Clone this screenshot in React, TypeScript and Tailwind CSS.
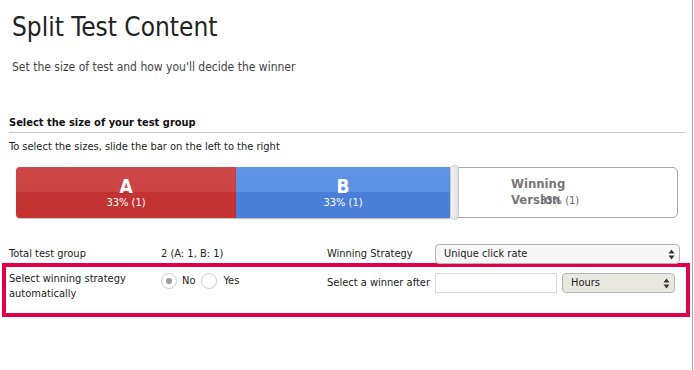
const font = { fontFamily: "'DejaVu Sans Condensed', 'DejaVu Sans', sans-serif" };

function SelectBox({ label, className }: { label: string; className: string }) {
  return (
    <div className={`flex items-center justify-between rounded-[4px] border border-[#b5b5b5] pl-2 pr-1 h-[20px] text-[11px] text-[#222] ${className}`}>
      <span>{label}</span>
      <svg width="7" height="11" viewBox="0 0 7 11">
        <path d="M3.5 0.5 L6.5 4.5 H0.5 Z" fill="#333" />
        <path d="M3.5 10.5 L6.5 6.5 H0.5 Z" fill="#333" />
      </svg>
    </div>
  );
}

function Radio({ checked }: { checked?: boolean }) {
  return (
    <span className="flex h-[16px] w-[16px] items-center justify-center rounded-full border border-[#cfcfcf] bg-white">
      {checked && <span className="h-[6px] w-[6px] rounded-full bg-[#9a9a9a]" />}
    </span>
  );
}

export default function App() {
  return (
    <div className="relative h-[370px] w-[694px] overflow-hidden bg-white text-[#222]" style={font}>
      <div className="absolute right-[1px] top-0 h-full w-px bg-[#a8a8a8]" />

      <div className="pl-3 pt-[12px]">
        <h1 className="text-[26px] leading-[30px] text-[#222]">Split Test Content</h1>
        <p className="mt-[16px] text-[12px] text-[#444]">Set the size of test and how you'll decide the winner</p>
      </div>

      <div className="ml-[9px] mr-[9px] mt-[39px] border-b border-[#c3c9cf] pb-0 text-[11px] font-bold text-[#111]">
        Select the size of your test group
      </div>
      <p className="ml-[9px] mt-[6px] text-[11px] text-[#222]">To select the sizes, slide the bar on the left to the right</p>

      {/* slider bar */}
      <div className="ml-[16px] mt-[12px] flex h-[51px] w-[662px]">
        <div className="flex w-[220px] flex-col items-center justify-center rounded-l-[4px] bg-[linear-gradient(#cf4847_0%,#cc4443_50%,#c23331_50%,#c23331_100%)] text-white shadow-[0_1px_1px_rgba(0,0,0,0.25)]">
          <span className="text-[19px] font-bold leading-[20px]">A</span>
          <span className="text-[11px] leading-[14px]">33% (1)</span>
        </div>
        <div className="flex w-[214px] flex-col items-center justify-center bg-[linear-gradient(#5f93e4_0%,#5c90e2_50%,#4a7ed9_50%,#4a7ed9_100%)] text-white shadow-[0_1px_1px_rgba(0,0,0,0.25)]">
          <span className="text-[19px] font-bold leading-[20px]">B</span>
          <span className="text-[11px] leading-[14px]">33% (1)</span>
        </div>
        <div className="relative z-10 -my-[2px] w-[9px] rounded-[5px] border border-[#c8c8c8] bg-[linear-gradient(90deg,#f2f2f2,#e2e2e2)]" />
        <div className="relative -ml-[2px] flex flex-1 items-center rounded-r-[5px] border border-[#a9a9a9] bg-white">
          <div className="absolute left-[53px] top-[8px] w-[60px] text-[13px] font-bold leading-[16px] text-[#777]">
            Winning Version
          </div>
          <span className="absolute left-[82px] top-[25px] text-[11px] text-[#666]">33% (1)</span>
        </div>
      </div>

      {/* totals row */}
      <div className="mt-[26px] flex items-center text-[11px]">
        <span className="ml-[9px] w-[152px]">Total test group</span>
        <span className="w-[166px]">2 (A: 1, B: 1)</span>
        <span className="w-[108px]">Winning Strategy</span>
        <SelectBox label="Unique click rate" className="w-[245px] bg-[#f7f7f7]" />
      </div>

      {/* highlighted row */}
      <div className="ml-[2px] -mt-[1px] flex h-[54px] w-[688px] items-start border-4 border-[#e2004b] pt-[4px] text-[11px]">
        <span className="ml-[3px] w-[152px] leading-[15px]">
          Select winning strategy<br />automatically
        </span>
        <div className="mt-[2px] flex w-[166px] items-center">
          <Radio checked />
          <span className="ml-[5px] mr-[6px]">No</span>
          <Radio />
          <span className="ml-[6px]">Yes</span>
        </div>
        <span className="mt-[4px] w-[108px]">Select a winner after</span>
        <div className="mt-[2px] h-[20px] w-[122px] border border-[#dadada] bg-white" />
        <SelectBox label="Hours" className="ml-[5px] mt-[2px] w-[113px] bg-[#e8e8e1]" />
      </div>
    </div>
  );
}
